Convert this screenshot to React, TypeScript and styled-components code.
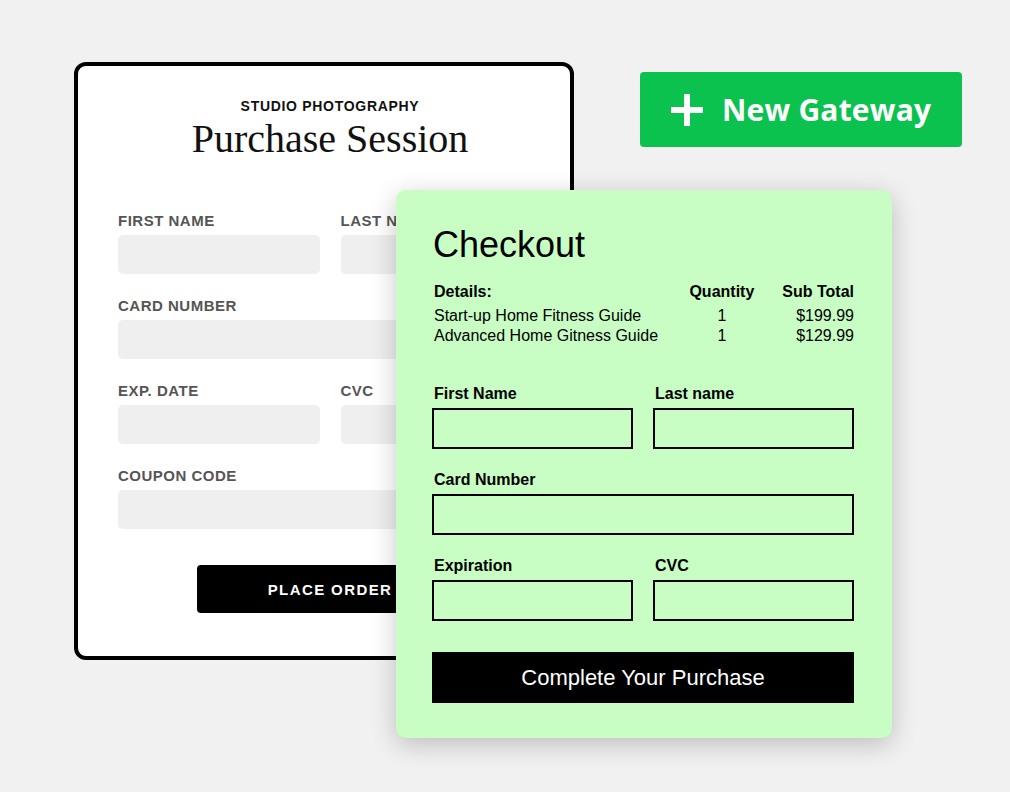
import React from "react";
import styled, { createGlobalStyle } from "styled-components";

const GlobalStyle = createGlobalStyle`
  html, body {
    margin: 0;
    padding: 0;
    background: #f1f1f1;
  }
  * {
    box-sizing: border-box;
  }
`;

const Stage = styled.div`
  position: relative;
  width: 1010px;
  height: 792px;
  overflow: hidden;
  background: #f1f1f1;
  font-family: "Liberation Sans", Arial, sans-serif;
`;

/* ---------- studio card (behind) ---------- */

const StudioCard = styled.div`
  position: absolute;
  left: 74px;
  top: 62px;
  width: 500px;
  height: 598px;
  background: #fff;
  border: 4px solid #000;
  border-radius: 12px;
  padding: 32px 28px 0 40px;
  display: flex;
  flex-direction: column;
`;

const Eyebrow = styled.div`
  text-align: center;
  font-size: 14px;
  line-height: 16px;
  font-weight: bold;
  letter-spacing: 0.7px;
  color: #111;
`;

const Title = styled.h1`
  margin: 5px 0 0;
  text-align: center;
  font-family: "Liberation Serif", "Times New Roman", serif;
  font-weight: normal;
  font-size: 40px;
  line-height: 40px;
  color: #111;
`;

const StudioForm = styled.div`
  margin-top: 53px;
  display: grid;
  grid-template-columns: 1fr 1fr;
  column-gap: 21px;
  row-gap: 23px;
`;

const StudioField = styled.div<{ $wide?: boolean }>`
  grid-column: ${(p) => (p.$wide ? "1 / -1" : "auto")};
  display: flex;
  flex-direction: column;
`;

const StudioLabel = styled.label`
  font-size: 15px;
  line-height: 18px;
  font-weight: bold;
  letter-spacing: 0.5px;
  color: #555;
  margin-bottom: 5px;
`;

const StudioInput = styled.div`
  height: 39px;
  background: #efefef;
  border-radius: 5px;
`;

const PlaceOrder = styled.button`
  margin: 36px auto 0;
  width: 266px;
  height: 48px;
  border: none;
  border-radius: 4px;
  background: #000;
  color: #fff;
  font-family: "Liberation Sans", Arial, sans-serif;
  font-size: 15px;
  font-weight: bold;
  letter-spacing: 1.4px;
`;

/* ---------- new gateway button ---------- */

const GatewayButton = styled.button`
  position: absolute;
  left: 640px;
  top: 72px;
  width: 322px;
  height: 75px;
  border: none;
  border-radius: 4px;
  background: #0cc24f;
  color: #fff;
  display: flex;
  align-items: center;
  gap: 19px;
  padding: 0 0 0 31px;
  font-family: "Open Sans", sans-serif;
  font-weight: 700;
  font-size: 30px;
  letter-spacing: 0.2px;
`;

/* ---------- checkout card (front) ---------- */

const CheckoutCard = styled.div`
  position: absolute;
  left: 396px;
  top: 190px;
  width: 496px;
  height: 548px;
  background: #c8fec4;
  border-radius: 10px;
  box-shadow: 0 6px 26px rgba(0, 0, 0, 0.22);
  padding: 35px 38px 0 36px;
  display: flex;
  flex-direction: column;
  color: #000;
`;

const CheckoutTitle = styled.h2`
  margin: 0;
  padding-left: 1px;
  font-size: 36px;
  line-height: 40px;
  font-weight: normal;
`;

const Summary = styled.div`
  margin-top: 17px;
  padding-left: 2px;
  display: grid;
  grid-template-columns: minmax(0, 1fr) auto auto;
  column-gap: 28px;
  font-size: 16px;
  line-height: 20px;
`;

const Cell = styled.div<{ $head?: boolean; $align?: string }>`
  font-weight: ${(p) => (p.$head ? "bold" : "normal")};
  text-align: ${(p) => p.$align || "left"};
  white-space: nowrap;
  margin-bottom: ${(p) => (p.$head ? "4px" : "0")};
`;

const CheckoutForm = styled.div`
  margin-top: 38px;
  display: grid;
  grid-template-columns: 1fr 1fr;
  column-gap: 20px;
  row-gap: 21px;
`;

const Field = styled.div<{ $wide?: boolean }>`
  grid-column: ${(p) => (p.$wide ? "1 / -1" : "auto")};
  display: flex;
  flex-direction: column;
`;

const FieldLabel = styled.label`
  font-size: 16px;
  line-height: 20px;
  font-weight: bold;
  padding-left: 2px;
  margin-bottom: 4px;
`;

const BoxInput = styled.div`
  height: 41px;
  border: 2px solid #000;
`;

const CompleteButton = styled.button`
  margin-top: 31px;
  height: 51px;
  border: none;
  background: #000;
  color: #fff;
  font-family: "Liberation Sans", Arial, sans-serif;
  font-size: 22px;
`;

const items = [
  { name: "Start-up Home Fitness Guide", qty: 1, total: "$199.99" },
  { name: "Advanced Home Gitness Guide", qty: 1, total: "$129.99" },
];

function PlusIcon() {
  return (
    <svg width="32" height="32" viewBox="0 0 32 32">
      <rect x="13" y="0" width="6" height="32" fill="#fff" />
      <rect x="0" y="13" width="32" height="6" fill="#fff" />
    </svg>
  );
}

export default function App() {
  return (
    <Stage>
      <GlobalStyle />
      <StudioCard>
        <Eyebrow>STUDIO PHOTOGRAPHY</Eyebrow>
        <Title>Purchase Session</Title>
        <StudioForm>
          <StudioField>
            <StudioLabel>FIRST NAME</StudioLabel>
            <StudioInput />
          </StudioField>
          <StudioField>
            <StudioLabel>LAST NAME</StudioLabel>
            <StudioInput />
          </StudioField>
          <StudioField $wide>
            <StudioLabel>CARD NUMBER</StudioLabel>
            <StudioInput />
          </StudioField>
          <StudioField>
            <StudioLabel>EXP. DATE</StudioLabel>
            <StudioInput />
          </StudioField>
          <StudioField>
            <StudioLabel>CVC</StudioLabel>
            <StudioInput />
          </StudioField>
          <StudioField $wide>
            <StudioLabel>COUPON CODE</StudioLabel>
            <StudioInput />
          </StudioField>
        </StudioForm>
        <PlaceOrder>PLACE ORDER</PlaceOrder>
      </StudioCard>

      <GatewayButton>
        <PlusIcon />
        New Gateway
      </GatewayButton>

      <CheckoutCard>
        <CheckoutTitle>Checkout</CheckoutTitle>
        <Summary>
          <Cell $head>Details:</Cell>
          <Cell $head>Quantity</Cell>
          <Cell $head $align="right">
            Sub Total
          </Cell>
          {items.map((it) => (
            <React.Fragment key={it.name}>
              <Cell>{it.name}</Cell>
              <Cell $align="center">{it.qty}</Cell>
              <Cell $align="right">{it.total}</Cell>
            </React.Fragment>
          ))}
        </Summary>
        <CheckoutForm>
          <Field>
            <FieldLabel>First Name</FieldLabel>
            <BoxInput />
          </Field>
          <Field>
            <FieldLabel>Last name</FieldLabel>
            <BoxInput />
          </Field>
          <Field $wide>
            <FieldLabel>Card Number</FieldLabel>
            <BoxInput />
          </Field>
          <Field>
            <FieldLabel>Expiration</FieldLabel>
            <BoxInput />
          </Field>
          <Field>
            <FieldLabel>CVC</FieldLabel>
            <BoxInput />
          </Field>
        </CheckoutForm>
        <CompleteButton>Complete Your Purchase</CompleteButton>
      </CheckoutCard>
    </Stage>
  );
}
